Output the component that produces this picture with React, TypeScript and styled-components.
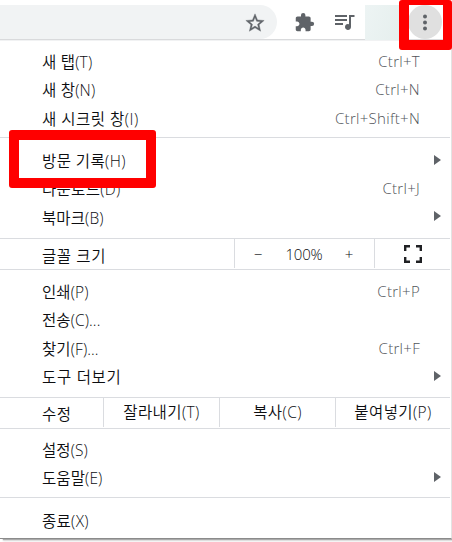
import React from "react";
import styled, { createGlobalStyle } from "styled-components";

const GlobalStyle = createGlobalStyle`
  * { box-sizing: border-box; }
  body { margin: 0; background: #fff; overflow: hidden; }
`;

const Window = styled.div`
  position: relative;
  width: 452px;
  height: 542px;
  overflow: hidden;
  background: #fff;
  color: #0c0d10;
  font-family: "Open Sans", "Noto Sans CJK KR", sans-serif;
  font-size: 15.5px;
  font-weight: 340;
`;

const Toolbar = styled.header`
  display: flex;
  height: 41px;
  padding-top: 5px;
  border-bottom: 1px solid #f1f2f3;
  box-shadow: inset 0 -1px 0 #d9dadc;
`;

const AddressBar = styled.div`
  display: flex;
  justify-content: flex-end;
  align-items: center;
  width: 277px;
  height: 34px;
  padding: 1px 11px 0 0;
  border-radius: 0 17px 17px 0;
  background: #f1f3f4;
`;

const ToolIcon = styled.svg<{ $left?: number; $size?: number }>`
  flex: none;
  display: block;
  width: ${(p) => p.$size ?? 20}px;
  height: ${(p) => p.$size ?? 20}px;
  margin-left: ${(p) => p.$left ?? 0}px;
  fill: #5f6368;
`;

const Tools = styled.div`
  display: flex;
  align-items: center;
  height: 34px;
`;

const ExtensionArea = styled.div`
  width: 44px;
  height: 35px;
  margin-left: 10px;
  background: linear-gradient(110deg, #edf4f4, #e4eeec);
`;

const MoreButton = styled.div`
  display: grid;
  place-items: center;
  width: 34px;
  height: 34px;
  margin-left: -1px;
  border-radius: 50%;
  background: #e0e0e0;
`;

const Menu = styled.main`
  height: 498px;
  border-right: 1px solid #e3e3e3;
  border-bottom: 1px solid #8b8b8b;
  box-shadow: 3px 1px 1px #aaa, 3px 2px 2px #ddd;
  padding-right: 1px;
`;

const Section = styled.section<{ $height: number; $top: number; $last?: boolean }>`
  height: ${(p) => p.$height}px;
  padding-top: ${(p) => p.$top}px;
  border-bottom: ${(p) => (p.$last ? "none" : "1px solid #dadce0")};
`;

const Row = styled.div`
  display: flex;
  align-items: center;
  height: 28.3px;
  padding: 0 10px 0 42px;
  line-height: 20px;
  white-space: nowrap;
`;

const Label = styled.span<{ $track?: number }>`
  flex: 1;
  letter-spacing: ${(p) => p.$track ?? 0.4}px;
`;

const Shortcut = styled.span`
  margin: -2px 20px 0 0;
  color: #505459;
  font-size: 15px;
  letter-spacing: 0.3px;
`;

const Arrow = styled.svg`
  width: 7px;
  height: 10px;
  margin-right: -1px;
  margin-top: -3px;
  fill: #5f6368;
`;

const Strip = styled.section<{ $columns: string }>`
  display: grid;
  grid-template-columns: ${(p) => p.$columns};
  height: 31px;
  border-bottom: 1px solid #dadce0;
  line-height: 20px;
  white-space: nowrap;
`;

const StripLabel = styled.div<{ $top: number }>`
  padding: ${(p) => p.$top}px 0 0 42px;
  letter-spacing: 0.6px;
`;

const Cell = styled.div<{ $lift?: number }>`
  display: flex;
  justify-content: center;
  align-items: center;
  height: 29px;
  padding-bottom: ${(p) => p.$lift ?? 0}px;
  border-left: 1px solid #dadce0;
  letter-spacing: 0.4px;
`;

const ZoomControls = styled(Cell)`
  justify-content: flex-start;
  font-size: 15px;
  letter-spacing: -0.2px;
`;

const ZoomPart = styled.span<{ $width: number }>`
  width: ${(p) => p.$width}px;
  text-align: center;
`;

const Highlight = styled.div<{ $box: string; $border: string }>`
  position: absolute;
  inset: ${(p) => p.$box};
  border: solid #f00;
  border-width: ${(p) => p.$border};
  border-radius: 3px;
`;

type Item = { label: string; keys?: string; sub?: boolean; track?: number };

const create: Item[] = [
  { label: "새 탭(T)", keys: "Ctrl+T", track: 0.2 },
  { label: "새 창(N)", keys: "Ctrl+N", track: 0.2 },
  { label: "새 시크릿 창(I)", keys: "Ctrl+Shift+N", track: 0.5 },
];
const library: Item[] = [
  { label: "방문 기록(H)", sub: true },
  { label: "다운로드(D)", keys: "Ctrl+J", track: 0.3 },
  { label: "북마크(B)", sub: true, track: 0.1 },
];
const page: Item[] = [
  { label: "인쇄(P)", keys: "Ctrl+P", track: 0.1 },
  { label: "전송(C)...", track: 0.1 },
  { label: "찾기(F)...", keys: "Ctrl+F", track: 0.1 },
  { label: "도구 더보기", sub: true, track: 0.7 },
];
const help: Item[] = [
  { label: "설정(S)", track: 0.1 },
  { label: "도움말(E)", sub: true, track: 0.1 },
];

const Rows = ({ items }: { items: Item[] }) => (
  <>
    {items.map((item) => (
      <Row key={item.label}>
        <Label $track={item.track}>{item.label}</Label>
        {item.keys && <Shortcut>{item.keys}</Shortcut>}
        {item.sub && (
          <Arrow viewBox="0 0 7 10">
            <path d="M0 0 7 5 0 10z" />
          </Arrow>
        )}
      </Row>
    ))}
  </>
);

export default function App() {
  return (
    <Window>
      <GlobalStyle />
      <Toolbar>
        <AddressBar>
          <ToolIcon viewBox="0 0 24 24" $size={22}>
            <path
              stroke="#5f6368"
              strokeWidth="0.4"
              d="M22 9.24l-7.19-.62L12 2 9.19 8.63 2 9.24l5.46 4.73L5.82 21 12 17.27 18.18 21l-1.63-7.03L22 9.24zM12 15.4l-3.76 2.27 1-4.28-3.32-2.88 4.38-.38L12 6.1l1.71 4.04 4.38.38-3.32 2.88 1 4.28L12 15.4z"
            />
          </ToolIcon>
        </AddressBar>
        <Tools>
          <ToolIcon viewBox="0 0 24 24" $left={17} $size={21}>
            <path d="M20.5 11H19V7c0-1.1-.9-2-2-2h-4V3.5a2.5 2.5 0 0 0-5 0V5H4c-1.1 0-1.99.9-1.99 2v3.8H3.5c1.49 0 2.7 1.21 2.7 2.7s-1.21 2.7-2.7 2.7H2V20c0 1.1.9 2 2 2h3.8v-1.5c0-1.49 1.21-2.7 2.7-2.7s2.7 1.21 2.7 2.7V22H17c1.1 0 2-.9 2-2v-4h1.5a2.5 2.5 0 0 0 0-5z" />
          </ToolIcon>
          <ToolIcon viewBox="0 0 20 16" $left={20}>
            <path d="M0 1h12v2H0zM0 5h12v2H0zM0 9h8v2H0zM14 1h5.500v2H16v10a3 3 0 1 1-2-2.830z" />
          </ToolIcon>
          <ExtensionArea />
          <MoreButton>
            <ToolIcon viewBox="0 0 20 20">
              <circle cx="10" cy="4.5" r="2" />
              <circle cx="10" cy="10.5" r="2" />
              <circle cx="10" cy="16.5" r="2" />
            </ToolIcon>
          </MoreButton>
        </Tools>
      </Toolbar>
      <Menu>
        <Section $height={97} $top={7}><Rows items={create} /></Section>
        <Section $height={101} $top={9}><Rows items={library} /></Section>
        <Strip $columns="234px 140px 1fr">
          <StripLabel $top={7}>글꼴 크기</StripLabel>
          <ZoomControls>
            <ZoomPart $width={46}>−</ZoomPart>
            <ZoomPart $width={46}>100%</ZoomPart>
            <ZoomPart $width={44}>+</ZoomPart>
          </ZoomControls>
          <Cell>
            <svg width="18" height="18" viewBox="0 0 18 18" fill="none" stroke="#202124" strokeWidth="2.4">
              <path d="M1.2 6V1.2H6M12 1.2h4.8V6M16.8 12v4.8H12M6 16.8H1.2V12" />
            </svg>
          </Cell>
        </Strip>
        <Section $height={128} $top={8}><Rows items={page} /></Section>
        <Strip $columns="103px 116px 116px 1fr">
          <StripLabel $top={6}>수정</StripLabel>
          <Cell $lift={2}>잘라내기(T)</Cell>
          <Cell $lift={2}>복사(C)</Cell>
          <Cell $lift={2}>붙여넣기(P)</Cell>
        </Strip>
        <Section $height={69} $top={7}><Rows items={help} /></Section>
        <Section $height={40} $top={9} $last><Rows items={[{ label: "종료(X)", track: 0.3 }]} /></Section>
      </Menu>
      <Highlight $box="0 0 492px 399px" $border="5px 9px 10px 10px" />
      <Highlight $box="130px 296px 354px 9px" $border="10px" />
    </Window>
  );
}
